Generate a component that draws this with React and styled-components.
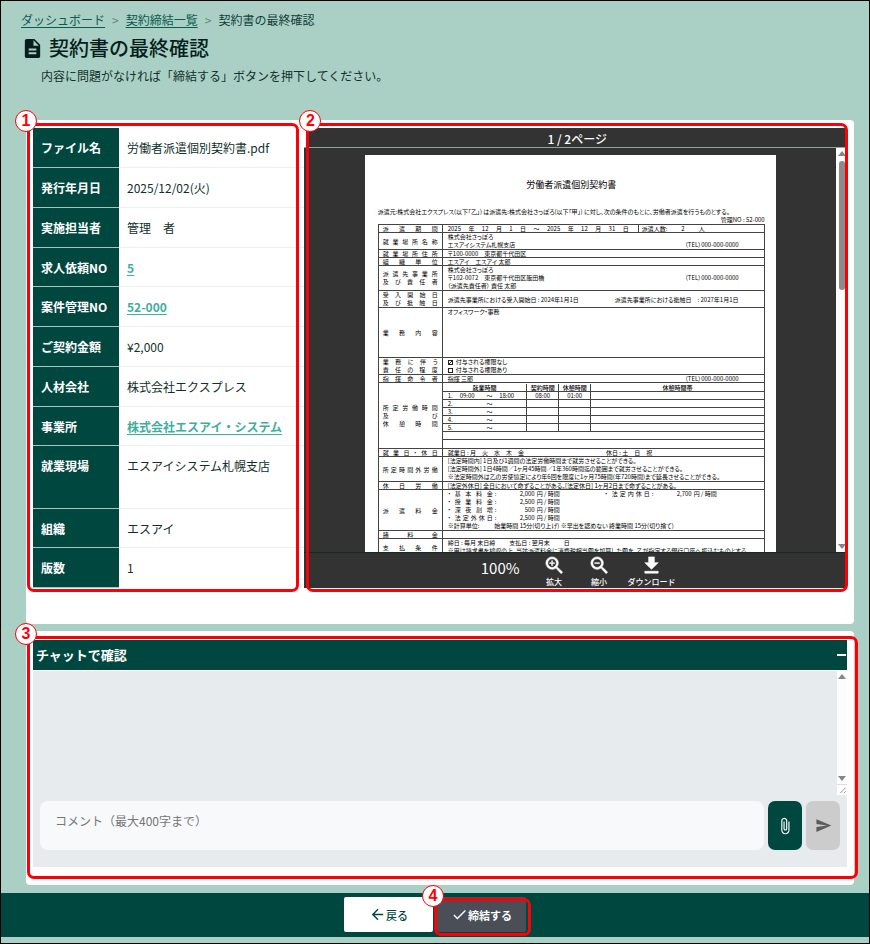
import React, { useState } from "react";
import styled, { createGlobalStyle, css } from "styled-components";
import {
  MdArrowBack,
  MdAttachFile,
  MdCheck,
  MdDescription,
  MdFileDownload,
  MdSend,
  MdZoomIn,
  MdZoomOut,
} from "react-icons/md";

const GlobalStyle = createGlobalStyle`
  * {
    box-sizing: border-box;
  }

  body {
    margin: 0;
    background: #aad0c5;
    color: #10302c;
    font-family: "Noto Sans CJK JP", "Noto Sans", sans-serif;
    font-size: 12px;
    line-height: 20px;
  }

  button,
  textarea {
    font: inherit;
  }
`;

const Page = styled.div`
  min-height: 100vh;
  display: flex;
  flex-direction: column;
  border: 1px solid #000;
`;

/* Top of the page */
const Header = styled.header`
  padding: 9px 20px 34px;
`;

const Breadcrumbs = styled.nav`
  display: flex;
  gap: 7px;
  color: #12403a;
`;

const Crumb = styled.a`
  color: #0c5a50;
  text-decoration: underline;
  text-underline-offset: 2px;
`;

const Separator = styled.span`
  color: #6b827d;
`;

const TitleRow = styled.div`
  display: flex;
  align-items: center;
  gap: 5px;
  margin-top: 4px;
`;

const Title = styled.h1`
  margin: 0;
  color: #071f1c;
  font-size: 20px;
  font-weight: 500;
  line-height: 28px;
`;

const Lead = styled.p`
  margin: 4px 0 0 20px;
`;

const Main = styled.main`
  display: flex;
  flex-direction: column;
  gap: 7px;
  padding: 0 15px 8px 25px;
`;

const Card = styled.section`
  padding: ${(props) => props.$padding};
  background: #fff;
  border-radius: 4px;
`;

const Columns = styled.div`
  display: grid;
  grid-template-columns: minmax(0, 1fr) minmax(0, 2fr);
`;

/* Numbered red frames laid over each area */
const Marked = styled.div`
  position: relative;
`;

const Frame = styled.div`
  position: absolute;
  inset: ${(props) => props.$inset};
  border: 3px solid #fb0007;
  border-radius: 7px;
  pointer-events: none;
  z-index: 1;
`;

const Badge = styled.span`
  position: absolute;
  top: -16px;
  left: ${(props) => (props.$inner ? "-10px" : "-15px")};
  width: 22px;
  height: 22px;
  border: 1px solid #fb0007;
  border-radius: 50%;
  background: #fff;
  color: #fb0007;
  font-family: "Liberation Sans", sans-serif;
  font-size: 16px;
  font-weight: 700;
  line-height: 20px;
  text-align: center;
`;

const Marker = ({ number, inset, inner }) => (
  <Frame $inset={inset}>
    <Badge $inner={inner}>{number}</Badge>
  </Frame>
);

/* Contract summary */
const InfoTable = styled.table`
  width: 100%;
  height: 460px;
  border-collapse: collapse;

  th,
  td {
    padding: 10px 8px 8px;
    text-align: left;
    vertical-align: top;
  }

  th {
    width: 86px;
    background: #004740;
    border-bottom: 1px solid #a9c3bf;
    color: #fff;
    font-weight: 700;
    white-space: nowrap;
  }

  td {
    border-bottom: 1px solid #eef0f0;
  }

  tr:last-child td {
    border-bottom: none;
  }
`;

const InfoRow = styled.tr`
  height: ${(props) => (props.$tall ? "61px" : "39px")};
`;

const InfoLink = styled.a`
  color: #3fae9c;
  font-weight: 600;
  text-underline-offset: 2px;
`;

/* PDF viewer */
const Viewer = styled.div`
  display: flex;
  flex-direction: column;
  height: 100%;
`;

const PageCount = styled.div`
  margin-left: 3px;
  background: #333;
  color: #fff;
  font-weight: 500;
  line-height: 19px;
  padding-top: 1px;
  height: 19px;
  text-align: center;
`;

const ViewerBody = styled.div`
  display: flex;
  height: 406px;
  border-top: 1px solid #8fa3a3;
  border-bottom: 1px solid #0e2b29;
  background: #333;
`;

const PageArea = styled.div`
  flex: 1;
  overflow: hidden;
  display: flex;
  justify-content: center;
  align-items: flex-start;
  padding-top: 7px;
`;

const Track = styled.div`
  width: ${(props) => props.$width};
  flex: none;
  display: flex;
  flex-direction: column;
  align-items: center;
  padding: 3px 0;
  background: #fcfcfc;
`;

const Arrow = styled.span`
  border: 4px solid transparent;
  ${(props) =>
    props.$down
      ? css`
          margin-top: auto;
          border-top: 5px solid #858585;
          border-bottom: none;
        `
      : css`
          border-bottom: 5px solid #858585;
          border-top: none;
        `}
`;

const Thumb = styled.span`
  width: 6px;
  height: 129px;
  margin-top: 5px;
  border-radius: 3px;
  background: #8b8b8b;
`;

const Toolbar = styled.div`
  flex: 1;
  display: flex;
  justify-content: center;
  gap: 12px;
  padding: 1px 0 0 5px;
  background: #333;
  color: #fff;
`;

const Zoom = styled.span`
  margin-right: 6px;
  font-size: 15px;
  line-height: 28px;
`;

const ToolButton = styled.button`
  min-width: 33px;
  display: flex;
  flex-direction: column;
  align-items: center;
  padding: 0;
  border: none;
  background: none;
  color: #fff;
  font-size: 8px;
  font-weight: 500;
  line-height: 10px;
  cursor: pointer;

  path:not([fill="none"]) {
    stroke: #fff;
    stroke-width: 0.6;
  }
`;

/* The sheet inside the viewer */
const Sheet = styled.article`
  flex: none;
  width: 411px;
  padding: 22px 11px 20px 13px;
  background: #fff;
  color: #000;
  font-size: 6px;
  line-height: 7px;
  font-feature-settings: "palt";
`;

const SheetTitle = styled.h2`
  margin: 0 0 15px;
  font-size: 9px;
  font-weight: 400;
  line-height: 16px;
  text-align: center;
`;

const SheetText = styled.p`
  margin: 0;
  line-height: 8px;
  white-space: nowrap;
  text-align: ${(props) => (props.$right ? "right" : "left")};
`;

const SheetTable = styled.table`
  width: 100%;
  border-collapse: collapse;
  table-layout: fixed;

  th,
  td {
    padding: 0;
    border: 1px solid #444;
    font-weight: 400;
  }
`;

const SheetRow = styled.tr`
  height: ${(props) => props.$height};
`;

const Label = styled.th`
  width: 64px;
  line-height: ${(props) => (props.$multi ? "8px" : "7px")};

  div {
    padding: 0 4px;
    text-align: justify;
    text-align-last: justify;
  }
`;

const SheetCell = styled.td`
  vertical-align: ${(props) => (props.$top ? "top" : "middle")};
`;

const Cell = styled.div`
  padding: 0 5px;
  line-height: ${(props) => (props.$loose ? "8px" : "7px")};
  white-space: nowrap;
`;

const Line = styled.div`
  display: flex;
  gap: ${(props) => props.$gap || "0"};
`;

const Tel = styled.span`
  margin-left: auto;
  padding-right: 20px;
`;

const Period = styled.div`
  display: grid;
  grid-template-columns: 195px 1fr;
`;

const Dates = styled.div`
  display: flex;
  justify-content: space-between;
  padding: 0 9px 0 5px;
`;

const Headcount = styled.div`
  display: flex;
  gap: 14px;
  padding-left: 3px;
  border-left: 1px solid #444;
`;

const Option = styled.label`
  display: flex;
  align-items: center;
  gap: 3px;

  input {
    appearance: none;
    width: 5px;
    height: 5px;
    margin: 0;
    border: 1px solid #222;
  }

  input:checked {
    background: linear-gradient(135deg, #fff 35%, #222 35% 65%, #fff 65%);
  }
`;

const HoursTable = styled.table`
  width: 100%;
  border-collapse: collapse;
  table-layout: fixed;
  text-align: center;

  th,
  td {
    height: 8px;
    line-height: 7px;
  }

  th {
    font-weight: 500;
  }

  th:nth-child(1) {
    width: 84px;
  }

  th:nth-child(2),
  th:nth-child(3) {
    width: 32px;
  }

  tr:first-child > * {
    border-top: none;
  }

  tr:last-child > * {
    border-bottom: none;
  }

  tr > :first-child {
    border-left: none;
  }

  tr > :last-child {
    border-right: none;
  }
`;

const Hours = styled.div`
  display: grid;
  grid-template-columns: 12px 20px 1fr 20px;
  padding: 0 7px 0 5px;
  text-align: left;

  span:nth-child(3) {
    text-align: center;
  }
`;

const Fees = styled.div`
  display: grid;
  grid-template-columns: 5px 38px 6px 32px 66px 5px 38px 6px 32px 1fr;
  column-gap: 2px;
`;

const FeeName = styled.span`
  text-align-last: justify;
`;

const Amount = styled.span`
  text-align: right;
`;

/* Chat */
const ChatHeader = styled.div`
  display: flex;
  align-items: center;
  justify-content: space-between;
  height: 31px;
  padding: 0 1px 0 3px;
  border-bottom: 1px solid #fff;
  background: #004740;
  color: #fff;
`;

const ChatTitle = styled.h2`
  margin: 0;
  font-size: 13px;
  font-weight: 700;
`;

const Collapse = styled.button`
  padding: 9px 0;
  border: none;
  background: none;
  cursor: pointer;

  span {
    display: block;
    width: 9px;
    height: 2px;
    background: #fff;
  }
`;

const ChatBody = styled.div`
  background: #e7ebee;
`;

const Log = styled.div`
  display: flex;
  justify-content: flex-end;
  height: 124px;
`;

const LogSide = styled.div`
  display: flex;
  flex-direction: column;

  ${Track} {
    flex: 1;
  }
`;

const Grip = styled.svg`
  width: 10px;
  height: 11px;
  border-top: 1px solid #ddd;
  background: #fff;
`;

const ChatForm = styled.form`
  display: flex;
  gap: 4px;
  padding: 6px 7px 17px;
`;

const Comment = styled.textarea`
  flex: 1;
  height: 49px;
  padding: 10px 15px;
  border: none;
  border-radius: 8px;
  outline: none;
  resize: none;
  background: #f8f9fb;
  color: #333;

  &::placeholder {
    color: #757575;
  }
`;

const ChatButton = styled.button`
  width: 34px;
  display: flex;
  align-items: center;
  justify-content: center;
  padding: 0;
  border: none;
  border-radius: 7px;
  background: ${(props) => (props.disabled ? "#ccc" : "#004740")};
  color: ${(props) => (props.disabled ? "#5c5c5c" : "#fff")};
  cursor: pointer;
`;

/* Bottom bar */
const Footer = styled.footer`
  display: flex;
  justify-content: center;
  gap: 4px;
  margin: auto 0 6px;
  padding: 4px 0 5px;
  background: #004740;
`;

const FooterButton = styled.button`
  width: 89px;
  height: 35px;
  display: flex;
  align-items: center;
  justify-content: center;
  padding: 0;
  border: none;
  border-radius: 2px;
  background: ${(props) => (props.$primary ? "#494e57" : "#fff")};
  color: ${(props) => (props.$primary ? "#fff" : "#004740")};
  font-size: 11px;
  font-weight: ${(props) => (props.$primary ? 700 : 500)};
  cursor: pointer;
`;

const info = [
  { label: "ファイル名", value: "労働者派遣個別契約書.pdf" },
  { label: "発行年月日", value: "2025/12/02(火)" },
  { label: "実施担当者", value: "管理　者" },
  { label: "求人依頼NO", value: "5", link: true },
  { label: "案件管理NO", value: "52-000", link: true },
  { label: "ご契約金額", value: "¥2,000" },
  { label: "人材会社", value: "株式会社エクスプレス" },
  { label: "事業所", value: "株式会社エスアイ・システム", link: true },
  { label: "就業現場", value: "エスアイシステム札幌支店", tall: true },
  { label: "組織", value: "エスアイ" },
  { label: "版数", value: "1" },
];

const period = "2025 年 12 月 1 日 ～ 2025 年 12 月 31 日".split(" ");

const fees = [
  ["基本料金", "2,000", "法定内休日", "2,700"],
  ["授業料金", "2,500"],
  ["深夜割増", "500"],
  ["法定外休日", "2,500"],
];

const Row = ({ height, labels, loose, bare, top, children }) => (
  <SheetRow $height={height}>
    <Label $multi={labels.length > 1}>
      {labels.map((text) => (
        <div key={text}>{text}</div>
      ))}
    </Label>
    <SheetCell $top={top}>
      {bare ? children : <Cell $loose={loose}>{children}</Cell>}
    </SheetCell>
  </SheetRow>
);

const Contract = () => (
  <Sheet>
    <SheetTitle>労働者派遣個別契約書</SheetTitle>
    <SheetText>
      派遣元:株式会社エクスプレス(以下「乙」) は派遣先:株式会社さっぽろ(以下「甲」)
      に対し、次の条件のもとに、労働者派遣を行うものとする。
    </SheetText>
    <SheetText $right>管理NO : 52-000</SheetText>
    <SheetTable>
      <tbody>
        <Row height="8px" labels={["派遣期間"]} bare>
          <Period>
            <Dates>
              {period.map((part, i) => (
                <span key={i}>{part}</span>
              ))}
            </Dates>
            <Headcount>
              <span>派遣人数:</span>
              <span>2</span>
              <span>人</span>
            </Headcount>
          </Period>
        </Row>
        <Row height="17px" labels={["就業場所名称"]} loose>
          <Line>株式会社さっぽろ</Line>
          <Line>
            エスアイシステム札幌支店
            <Tel>（TEL）000-000-0000</Tel>
          </Line>
        </Row>
        <Row height="8px" labels={["就業場所住所"]}>
          〒100-0000　東京都千代田区
        </Row>
        <Row height="8px" labels={["組織単位"]}>
          エスアイ　エスアイ 太郎
        </Row>
        <Row height="25px" labels={["派遣先事業所", "及び責任者"]} loose>
          <Line>株式会社さっぽろ</Line>
          <Line>
            〒102-0072　東京都千代田区飯田橋
            <Tel>（TEL）000-000-0000</Tel>
          </Line>
          <Line>（派遣先責任者） 責任 太郎</Line>
        </Row>
        <Row height="17px" labels={["受入開始日", "及び抵触日"]}>
          <Line $gap="36px">
            <span>派遣先事業所における受入開始日 : 2024年1月1日</span>
            <span>派遣先事業所における抵触日　: 2027年1月1日</span>
          </Line>
        </Row>
        <Row height="50px" labels={["業務内容"]} top>
          オフィスワーク・事務
        </Row>
        <Row height="17px" labels={["業務に伴う", "責任の程度"]} loose>
          <Option>
            <input type="checkbox" defaultChecked />
            付与される権限なし
          </Option>
          <Option>
            <input type="checkbox" />
            付与される権限あり
          </Option>
        </Row>
        <Row height="8px" labels={["指揮命令者"]}>
          <Line>
            指揮 三郎
            <Tel>（TEL）000-000-0000</Tel>
          </Line>
        </Row>
        <Row height="66px" labels={["所定労働時間", "及び", "休憩時間"]} bare>
          <HoursTable>
            <tbody>
              <tr>
                <th>就業時間</th>
                <th>契約時間</th>
                <th>休憩時間</th>
                <th>休憩時間帯</th>
              </tr>
              {[1, 2, 3, 4, 5].map((n) => (
                <tr key={n}>
                  <td>
                    <Hours>
                      <span>{n}.</span>
                      <span>{n === 1 && "09:00"}</span>
                      <span>～</span>
                      <span>{n === 1 && "18:00"}</span>
                    </Hours>
                  </td>
                  <td>{n === 1 && "08:00"}</td>
                  <td>{n === 1 && "01:00"}</td>
                  <td />
                </tr>
              ))}
              <tr>
                <td colSpan={4} />
              </tr>
              <tr>
                <td colSpan={4} />
              </tr>
            </tbody>
          </HoursTable>
        </Row>
        <Row height="8px" labels={["就業日・休日"]}>
          <Line $gap="82px">
            <span>就業日 : 月　火　水　木　金</span>
            <span>休日 : 土　日　祝</span>
          </Line>
        </Row>
        <Row height="25px" labels={["所定時間外労働"]} loose>
          <Line>[法定時間内] 1日及び1週間の法定労働時間まで就労させることができる。</Line>
          <Line>
            [法定時間外] 1日4時間／1ヶ月45時間／1年360時間迄の範囲まで就労させることができる。
          </Line>
          <Line>
            ※法定時間外は乙の労使協定により年6回を限度に1ヶ月75時間(年720時間)まで延長させることができる。
          </Line>
        </Row>
        <Row height="8px" labels={["休日労働"]}>
          [法定外休日] 全日において命ずることがある。[法定休日] 1ヶ月2日まで命ずることがある。
        </Row>
        <Row height="41px" labels={["派遣料金"]} loose>
          {fees.map(([name, amount, name2, amount2]) => (
            <Fees key={name}>
              <span>・</span>
              <FeeName>{name}</FeeName>
              <span>:</span>
              <Amount>{amount}</Amount>
              <span>円 / 時間</span>
              {name2 && (
                <>
                  <span>・</span>
                  <FeeName>{name2}</FeeName>
                  <span>:</span>
                  <Amount>{amount2}</Amount>
                  <span>円 / 時間</span>
                </>
              )}
            </Fees>
          ))}
          <Line $gap="15px">
            <span>※計算単位:</span>
            <span>始業時間 15分(切り上げ) ※早出を認めない 終業時間 15分(切り捨て)</span>
          </Line>
        </Row>
        <Row height="8px" labels={["諸料金"]} />
        <Row height="17px" labels={["支払条件"]} loose>
          <Line $gap="14px">
            <span>締日 : 毎月 末日締</span>
            <span>支払日 : 翌月末</span>
            <span>日</span>
          </Line>
          <Line>
            ※甲は請求書を検収の上、当該派遣料金に消費税相当額を加算した額を、乙が指定する銀行口座へ振込むものとする。
          </Line>
        </Row>
      </tbody>
    </SheetTable>
  </Sheet>
);

const App = () => {
  const [comment, setComment] = useState("");

  return (
    <Page>
      <GlobalStyle />
      <Header>
        <Breadcrumbs>
          <Crumb href="#dashboard">ダッシュボード</Crumb>
          <Separator>&gt;</Separator>
          <Crumb href="#contracts">契約締結一覧</Crumb>
          <Separator>&gt;</Separator>
          <span>契約書の最終確認</span>
        </Breadcrumbs>
        <TitleRow>
          <MdDescription size={23} color="#071f1c" />
          <Title>契約書の最終確認</Title>
        </TitleRow>
        <Lead>内容に問題がなければ「締結する」ボタンを押下してください。</Lead>
      </Header>

      <Main>
        <Card $padding="8px 7px 36px">
          <Columns>
            <Marked>
              <InfoTable>
                <tbody>
                  {info.map(({ label, value, link, tall }) => (
                    <InfoRow key={label} $tall={tall}>
                      <th scope="row">{label}</th>
                      <td>
                        {link ? <InfoLink href="#detail">{value}</InfoLink> : value}
                      </td>
                    </InfoRow>
                  ))}
                </tbody>
              </InfoTable>
              <Marker number={1} inset="-5px 5px -4px -6px" />
            </Marked>
            <Marked>
              <Viewer>
                <PageCount>1 / 2ページ</PageCount>
                <ViewerBody>
                  <PageArea>
                    <Contract />
                  </PageArea>
                  <Track $width="11px">
                    <Arrow />
                    <Thumb />
                    <Arrow $down />
                  </Track>
                </ViewerBody>
                <Toolbar>
                  <Zoom>100%</Zoom>
                  <ToolButton type="button">
                    <MdZoomIn size={23} />
                    拡大
                  </ToolButton>
                  <ToolButton type="button">
                    <MdZoomOut size={23} />
                    縮小
                  </ToolButton>
                  <ToolButton type="button">
                    <MdFileDownload size={23} />
                    ダウンロード
                  </ToolButton>
                </Toolbar>
              </Viewer>
              <Marker number={2} inset="-5px -1px -4px 2px" inner />
            </Marked>
          </Columns>
        </Card>

        <Card $padding="9px 7px 18px">
          <Marked>
            <ChatHeader>
              <ChatTitle>チャットで確認</ChatTitle>
              <Collapse type="button" aria-label="チャットを閉じる">
                <span />
              </Collapse>
            </ChatHeader>
            <ChatBody>
              <Log>
                <LogSide>
                  <Track $width="10px">
                    <Arrow />
                    <Arrow $down />
                  </Track>
                  <Grip viewBox="0 0 10 11">
                    <path d="M3 9 L9 3 M7 9 L9 7" stroke="#888" fill="none" />
                  </Grip>
                </LogSide>
              </Log>
              <ChatForm>
                <Comment
                  aria-label="コメント"
                  placeholder="コメント（最大400字まで）"
                  maxLength={400}
                  value={comment}
                  onChange={(e) => setComment(e.target.value)}
                />
                <ChatButton type="button" aria-label="ファイルを添付">
                  <MdAttachFile size={18} />
                </ChatButton>
                <ChatButton type="submit" aria-label="送信" disabled={!comment}>
                  <MdSend size={17} />
                </ChatButton>
              </ChatForm>
            </ChatBody>
            <Marker number={3} inset="-4px -11px -12px -6px" />
          </Marked>
        </Card>
      </Main>

      <Footer>
        <FooterButton type="button">
          <MdArrowBack size={17} />
          戻る
        </FooterButton>
        <Marked>
          <FooterButton type="button" $primary>
            <MdCheck size={17} />
            締結する
          </FooterButton>
          <Marker number={4} inset="1px -5px -4px -3px" />
        </Marked>
      </Footer>
    </Page>
  );
};

export default App;
